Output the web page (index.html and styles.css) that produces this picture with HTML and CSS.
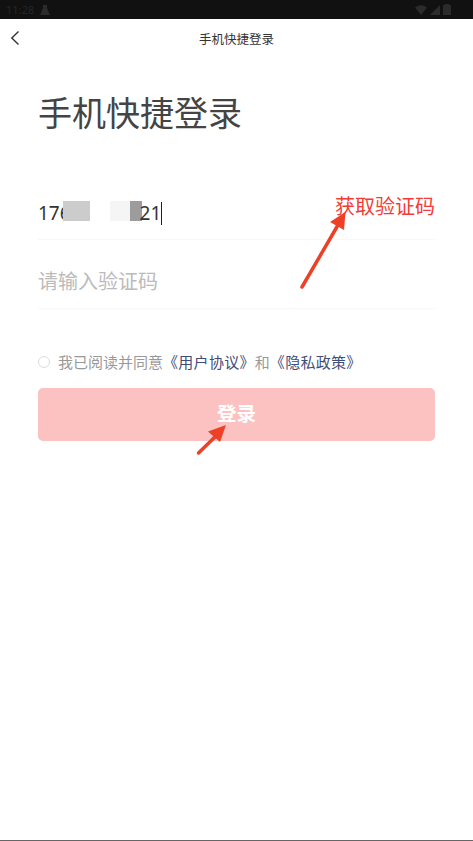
FILE: index.html
```html
<!DOCTYPE html>
<html lang="zh-CN">
<head>
  <meta charset="UTF-8" />
  <meta name="viewport" content="width=device-width, initial-scale=1" />
  <title>手机快捷登录</title>
  <link rel="stylesheet" href="styles.css">
</head>
<body>
  <div class="page">
    <div class="statusBar">
      <div class="statusLeft">
        <span>11:28</span>
        <svg width="10" height="10" viewBox="0 0 10 10"><path d="M3 0h4v3l3 7H0l3-7z" fill="#2b2b2b"/></svg>
      </div>
      <div class="statusRight">
        <svg width="12" height="10" viewBox="0 0 12 10"><path d="M0 2.5Q6-2 12 2.5L6 10z" fill="#2b2b2b"/></svg>
        <svg width="10" height="10" viewBox="0 0 10 10"><path d="M10 0v10H0z" fill="#2b2b2b"/></svg>
        <svg width="8" height="11" viewBox="0 0 8 11"><path d="M2 0h4v1h2v10H0V1h2z" fill="#2b2b2b"/></svg>
      </div>
    </div>

    <div class="navBar">
      <svg class="backIcon" width="10" height="16" viewBox="0 0 10 16"><path d="M8.5 1.5 1.8 8l6.7 6.5" fill="none" stroke="#333" stroke-width="1.4"/></svg>
      <span>手机快捷登录</span>
    </div>

    <div class="content">
      <h1>手机快捷登录</h1>

      <div class="field phoneField">
        <div class="phone">
          <span>176</span>
          <span class="masks">
            <i class="mask maskA"></i>
            <i class="mask maskB"></i>
            <i class="mask maskC"></i>
          </span>
          <span>21</span>
          <i class="cursor"></i>
        </div>
        <a class="getCode">获取验证码</a>
      </div>

      <div class="field codeField">请输入验证码</div>

      <div class="agree">
        <i class="radio"></i>
        <span>我已阅读并同意<a>《用户协议》</a>和<a>《隐私政策》</a></span>
      </div>

      <button class="button">登录</button>
    </div>

    <svg class="arrows" width="473" height="841" viewBox="0 0 473 841">
      <path d="M302 287 338 225" stroke="#ee4026" stroke-width="3.5" stroke-linecap="round" fill="none"/>
      <path d="M345.5 212 330 222 344 230z" fill="#ee4026"/>
      <path d="M198.5 453 216 436" stroke="#ee4026" stroke-width="3.5" stroke-linecap="round" fill="none"/>
      <path d="M226 425 208 431.500 220 442z" fill="#ee4026"/>
    </svg>

    <div class="bottomLine"></div>
  </div>
</body>
</html>
```

FILE: styles.css
```css
html, body {
  margin: 0;
  height: 100%;
  background-color: #fff;
  font-family: "Noto Sans", "Noto Sans CJK SC", sans-serif;
}

.page {
  position: relative;
  height: 841px;
  display: flex;
  flex-direction: column;
  overflow: hidden;
}

.statusBar {
  height: 19px;
  flex: none;
  background-color: #111;
  color: #262626;
  font-size: 11px;
  display: flex;
  justify-content: space-between;
  align-items: center;
  padding: 0 22px 0 6px;
}

.statusLeft, .statusRight {
  display: flex;
  align-items: center;
  gap: 6px;
}

.statusRight {
  gap: 3px;
}

.navBar {
  height: 38px;
  flex: none;
  display: flex;
  justify-content: center;
  align-items: center;
  position: relative;
  font-size: 12.5px;
  color: #333;
}

.backIcon {
  position: absolute;
  left: 10px;
  top: 11px;
}

.content {
  flex: 1;
  padding: 0 38px;
}

h1 {
  margin: 33px 0 0;
  font-size: 34px;
  font-weight: 400;
  line-height: 46px;
  color: #444;
}

.field {
  display: flex;
  justify-content: space-between;
  align-items: center;
  border-bottom: 1px solid #f7f7f7;
  box-sizing: border-box;
}

.phoneField {
  height: 67px;
  margin-top: 37px;
}

.phone {
  display: flex;
  align-items: center;
  font-size: 19px;
  color: #333;
  margin-top: 14px;
}

.masks {
  display: flex;
  margin-left: -8px;
  margin-right: -2px;
  margin-bottom: 4px;
}

.mask {
  display: block;
  height: 20px;
}

.maskA {
  width: 27px;
  margin-right: 20px;
  background-color: #ccc;
}

.maskB {
  width: 20px;
  background-color: #f5f5f5;
}

.maskC {
  width: 12px;
  background-color: #9c9c9c;
}

.cursor {
  display: block;
  width: 1px;
  height: 23px;
  background-color: #222;
}

.getCode {
  font-size: 20px;
  color: #f33c36;
  margin-top: -1px;
}

.codeField {
  height: 69px;
  font-size: 20px;
  color: #bbb;
  padding-top: 12px;
}

.agree {
  display: flex;
  align-items: center;
  gap: 8px;
  margin-top: 41px;
  height: 22px;
  font-size: 15px;
  color: #999;
}

.agree a {
  color: #3f4d78;
  letter-spacing: 0.3px;
}

.radio {
  display: block;
  width: 10px;
  height: 10px;
  margin-top: 1px;
  border: 1px solid #ddd;
  border-radius: 50%;
}

.button {
  display: block;
  width: 397px;
  height: 53px;
  margin-top: 16px;
  padding: 0 0 4px;
  background-color: #fbc2c1;
  color: #fff;
  font-family: inherit;
  font-size: 19.5px;
  font-weight: 700;
  border: none;
  border-radius: 5px;
}

.arrows {
  position: absolute;
  left: 0;
  top: 0;
  pointer-events: none;
}

.bottomLine {
  height: 1px;
  flex: none;
  background-color: #666;
}
```
